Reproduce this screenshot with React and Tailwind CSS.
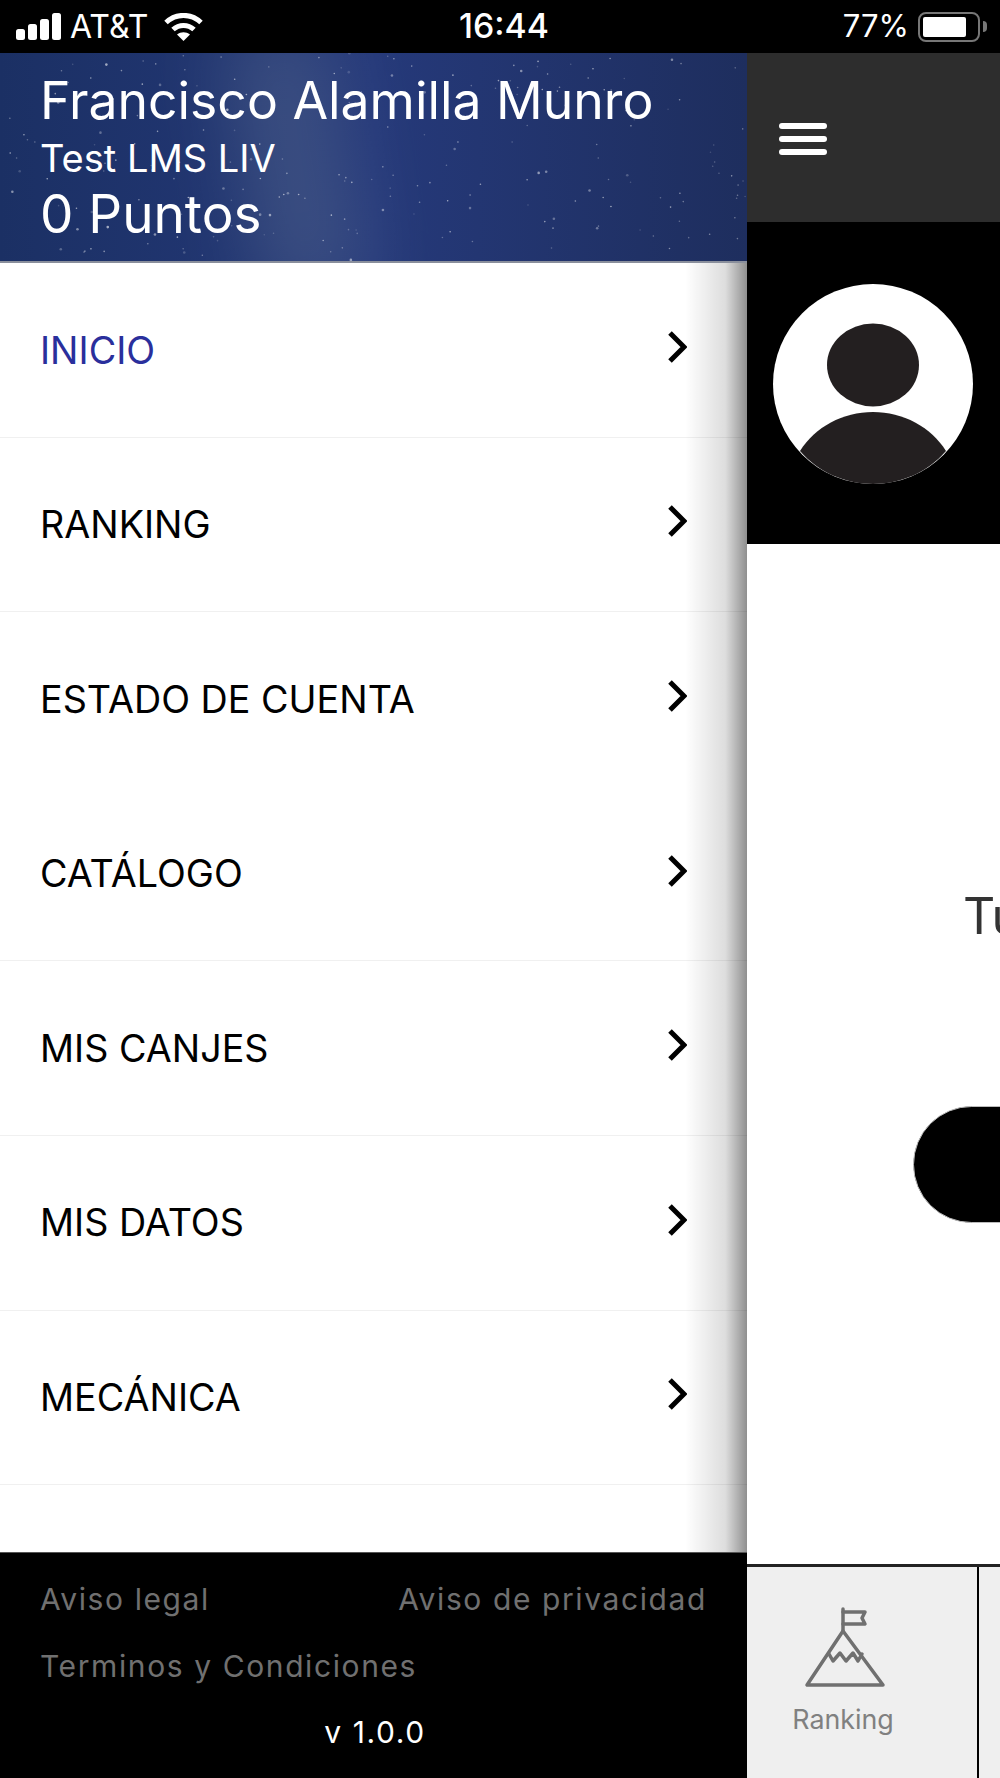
const MENU = ["INICIO", "RANKING", "ESTADO DE CUENTA", "CATÁLOGO", "MIS CANJES", "MIS DATOS", "MECÁNICA"];

const rand = (n) => {
  const v = Math.sin(n * 127.1 + 11.7) * 43758.5453;
  return v - Math.floor(v);
};

// pseudo-random star positions for the header picture
const STARS = Array.from({ length: 220 }, (_, i) => ({
  x: rand(i) * 747,
  y: rand(i + 500) * 210,
  r: rand(i + 900) > 0.85 ? 1.3 : 0.8,
  o: 0.15 + rand(i + 1300) * 0.45,
}));

function StatusBar() {
  return (
    <div className="h-[53px] bg-black text-white flex items-center justify-between pl-4 pr-[13px] text-[32px] relative">
      <div className="flex items-center">
        <svg width="45" height="27" viewBox="0 0 45 27" fill="white">
          <rect x="0" y="16" width="9" height="11" rx="2.5" />
          <rect x="12" y="11" width="9" height="16" rx="2.5" />
          <rect x="24" y="6" width="9" height="21" rx="2.5" />
          <rect x="36" y="0" width="9" height="27" rx="2.5" />
        </svg>
        <span className="ml-[9px]">AT&amp;T</span>
        <svg className="ml-[16px]" width="39" height="28" viewBox="0 0 39 28" fill="none" stroke="white" strokeWidth="5">
          <path d="M2 9.5C12 0 27 0 37 9.5" />
          <path d="M9 16.5C15 11 24 11 30 16.5" />
          <path d="M19.5 28L13 21.5C17 18.5 22 18.5 26 21.5Z" fill="white" stroke="none" />
        </svg>
      </div>
      <span className="absolute left-[459px] text-[33.8px] font-medium">16:44</span>
      <div className="flex items-center">
        <span className="text-[31px]">77%</span>
        <div className="ml-[9px] w-[62px] h-[30px] border-2 border-[#777] rounded-[8px] p-[3px]">
          <div className="h-full w-[43px] bg-white rounded-[2px]" />
        </div>
        <div className="ml-[3px] w-[4px] h-[11px] bg-[#777] rounded-r-full" />
      </div>
    </div>
  );
}

function DrawerHeader() {
  return (
    <div className="relative h-[210px] overflow-hidden bg-[#223569] border-b-2 border-[#8a8f9c] text-white pl-[40px] pt-[19px]">
      <div className="absolute inset-0 bg-gradient-to-r from-[#1b3064] via-[#25397a] to-[#1e2e5e]" />
      <div className="absolute left-[245px] -top-[30px] w-[100px] h-[280px] bg-[#8a9aa8] opacity-25 blur-2xl -rotate-[9deg]" />
      <svg className="absolute inset-0" width="747" height="210">
        {STARS.map((s, i) => (
          <circle key={i} cx={s.x} cy={s.y} r={s.r} fill="white" opacity={s.o} />
        ))}
      </svg>
      <div className="relative">
        <div className="text-[51.7px] leading-[56px]">Francisco Alamilla Munro</div>
        <div className="text-[38px] leading-[50px] mt-[5px]">Test LMS LIV</div>
        <div className="text-[53px] leading-[62px]">0 Puntos</div>
      </div>
    </div>
  );
}

function Drawer() {
  return (
    <aside className="w-[747px] shrink-0 flex flex-col relative">
      <DrawerHeader />
      <nav className="flex-1 bg-white relative">
        {MENU.map((label, i) => (
          <div
            key={label}
            className={`h-[174.6px] pl-[40px] pr-[60px] flex items-center justify-between text-[37.7px] ${
              i === 2 ? "" : "border-b border-[#f0f0f0]"
            } ${i === 0 ? "text-[#2a2f9c]" : "text-black"}`}
          >
            <span>{label}</span>
            <svg className="mb-[6px]" width="20" height="32" viewBox="0 0 20 32" fill="none" stroke="black" strokeWidth="5">
              <path d="M3 2L17 16L3 30" />
            </svg>
          </div>
        ))}
        <div className="absolute right-0 top-0 bottom-0 w-[62px] bg-gradient-to-r from-transparent via-[#00000022] via-65% to-[#00000070]" />
      </nav>
      <footer className="h-[226px] bg-black border-t border-[#555] pl-[40px] pr-[40px] pt-[26px] text-[30px] tracking-[1.6px] text-[#707070]">
        <div className="flex justify-between leading-[40px]">
          <span>Aviso legal</span>
          <span>Aviso de privacidad</span>
        </div>
        <div className="leading-[40px] mt-[27px]">Terminos y Condiciones</div>
        <div className="leading-[40px] mt-[26px] pl-[3px] text-center text-white">v 1.0.0</div>
      </footer>
    </aside>
  );
}

function MainPanel() {
  return (
    <main className="flex-1 min-w-0 flex flex-col overflow-hidden">
      <div className="h-[169px] shrink-0 bg-[#2d2d2d] flex items-center pl-[32px] pt-[2px]">
        <div className="w-[48px] flex flex-col gap-[7px]">
          <div className="h-[6px] rounded-full bg-white" />
          <div className="h-[6px] rounded-full bg-white" />
          <div className="h-[6px] rounded-full bg-white" />
        </div>
      </div>
      <div className="h-[322px] shrink-0 bg-black pl-[26px] pt-[62px]">
        <svg width="200" height="200" viewBox="0 0 200 200">
          <circle cx="100" cy="100" r="100" fill="white" />
          <ellipse cx="100" cy="81" rx="46" ry="41.5" fill="#231f20" />
          <path d="M27 167C42 143 70 128 100 128C130 128 158 143 173 167C155 188 128 200 100 200C72 200 45 188 27 167Z" fill="#231f20" />
        </svg>
      </div>
      <div className="flex-1 bg-white overflow-hidden">
        <div className="pl-[216px] pt-[342px] text-[50px] leading-[60px] text-[#333] whitespace-nowrap">Tu</div>
        <div className="ml-[166px] mt-[160px] h-[117px] w-[200px] rounded-l-full bg-black border border-[#bbb]" />
      </div>
      <div className="h-[214px] shrink-0 bg-[#efefef] border-t-[3px] border-[#222] flex">
        <div className="w-[232px] border-r-2 border-black flex flex-col items-center pt-[40px] pr-[38px] text-[#808080]">
          <svg className="ml-[4px]" width="86" height="82" viewBox="0 0 86 82" fill="none" stroke="#707070" strokeWidth="3.5" strokeLinejoin="round" strokeLinecap="round">
            <path d="M41 24V2" />
            <path d="M41 5H63L60 11L63 17H41" />
            <path d="M41 24L5 78H81Z" />
            <path d="M27 47L31 54L38 46L44 54L51 46L56 54L60 47" />
          </svg>
          <span className="text-[26.8px] leading-[30px] mt-[15px]">Ranking</span>
        </div>
        <div className="flex-1" />
      </div>
    </main>
  );
}

export default function App() {
  return (
    <div className="w-[1000px] h-[1778px] overflow-hidden flex flex-col font-['Inter','Roboto',sans-serif]">
      <StatusBar />
      <div className="flex-1 min-h-0 flex">
        <Drawer />
        <MainPanel />
      </div>
    </div>
  );
}
